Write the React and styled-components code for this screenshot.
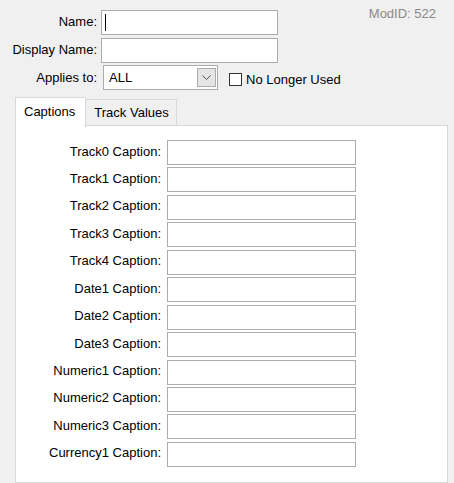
import React, { useState } from 'react';
import styled, { createGlobalStyle } from 'styled-components';

const captions = [
  'Track0 Caption:',
  'Track1 Caption:',
  'Track2 Caption:',
  'Track3 Caption:',
  'Track4 Caption:',
  'Date1 Caption:',
  'Date2 Caption:',
  'Date3 Caption:',
  'Numeric1 Caption:',
  'Numeric2 Caption:',
  'Numeric3 Caption:',
  'Currency1 Caption:',
];

function App() {
  const [tab, setTab] = useState('captions');

  return (
    <Window>
      <GlobalStyle />
      <Header>
        <TopForm>
          <Label>Name:</Label>
          <CaretBox>
            <TextBox />
            <Caret />
          </CaretBox>
          <Label>Display Name:</Label>
          <TextBox />
          <Label>Applies to:</Label>
          <SelectRow>
            <Combo>
              <ComboText>ALL</ComboText>
              <ComboButton>
                <svg width="9" height="5" viewBox="0 0 9 5">
                  <path d="M0.5 0.5 L4.5 4.5 L8.5 0.5" fill="none" stroke="#555" strokeWidth="1" />
                </svg>
              </ComboButton>
            </Combo>
            <Check>
              <CheckBox />
              No Longer Used
            </Check>
          </SelectRow>
        </TopForm>
        <ModId>ModID: 522</ModId>
      </Header>

      <Tabs>
        <TabStrip>
          <Tab active={tab === 'captions'} onClick={() => setTab('captions')}>
            Captions
          </Tab>
          <Tab active={tab === 'values'} onClick={() => setTab('values')}>
            Track Values
          </Tab>
        </TabStrip>
        <Panel>
          {tab === 'captions' && (
            <CaptionGrid>
              {captions.map((c) => (
                <React.Fragment key={c}>
                  <CaptionLabel>{c}</CaptionLabel>
                  <CaptionInput />
                </React.Fragment>
              ))}
            </CaptionGrid>
          )}
        </Panel>
      </Tabs>
    </Window>
  );
}

const GlobalStyle = createGlobalStyle`
  body {
    margin: 0;
    background: #f0f0f0;
    font-family: "Liberation Sans", Arial, sans-serif;
    font-size: 13px;
    color: #000;
  }
`;

const Window = styled.div`
  width: 454px;
  height: 483px;
  background: #f0f0f0;
  overflow: hidden;
`;

const Header = styled.div`
  display: flex;
  align-items: flex-start;
`;

const TopForm = styled.div`
  display: grid;
  grid-template-columns: 97px 177px;
  column-gap: 4px;
  row-gap: 3px;
  padding-top: 10px;
  align-items: center;
`;

const Label = styled.div`
  text-align: right;
  white-space: nowrap;
  padding-bottom: 2px;
`;

const TextBox = styled.div`
  height: 25px;
  box-sizing: border-box;
  background: #fff;
  border: 1px solid #acacac;
`;

const CaretBox = styled.div`
  position: relative;
`;

const Caret = styled.span`
  position: absolute;
  left: 4px;
  top: 4px;
  width: 1px;
  height: 17px;
  background: #000;
`;

const SelectRow = styled.div`
  display: flex;
  align-items: center;
  margin: -1px 0 0 2px;
  width: 260px;
`;

const Combo = styled.div`
  width: 115px;
  height: 25px;
  box-sizing: border-box;
  background: #fff;
  border: 1px solid #acacac;
  display: flex;
  align-items: center;
  padding: 1px;
`;

const ComboText = styled.span`
  flex: 1;
  padding-left: 4px;
  padding-bottom: 1px;
`;

const ComboButton = styled.div`
  width: 19px;
  height: 19px;
  box-sizing: border-box;
  background: #e5e5e5;
  border: 1px solid #acacac;
  display: flex;
  align-items: center;
  justify-content: center;
`;

const Check = styled.label`
  display: flex;
  align-items: center;
  gap: 4px;
  margin: 4px 0 0 11px;
  white-space: nowrap;
`;

const CheckBox = styled.span`
  width: 13px;
  height: 13px;
  box-sizing: border-box;
  background: #fff;
  border: 1px solid #333;
`;

const ModId = styled.div`
  margin-left: auto;
  padding: 6px 18px 0 0;
  color: #8a8a8a;
`;

const Tabs = styled.div`
  margin: 6px 0 0 15px;
  width: 433px;
`;

const TabStrip = styled.div`
  display: flex;
  align-items: flex-end;
  height: 30px;
  position: relative;
  z-index: 1;
`;

const Tab = styled.div`
  box-sizing: border-box;
  height: ${(p) => (p.active ? '30px' : '27px')};
  padding: ${(p) => (p.active ? '6px 10px 0 8px' : '5px 7px 0 8px')};
  background: ${(p) => (p.active ? '#fff' : '#f0f0f0')};
  border: 1px solid #d9d9d9;
  border-bottom: ${(p) => (p.active ? 'none' : '1px solid #d9d9d9')};
  margin-left: ${(p) => (p.active ? '0' : '-1px')};
  margin-bottom: ${(p) => (p.active ? '-1px' : '0')};
  cursor: pointer;
  white-space: nowrap;
`;

const Panel = styled.div`
  box-sizing: border-box;
  height: 358px;
  margin-top: -1px;
  background: #fff;
  border: 1px solid #d9d9d9;
  padding-top: 14px;
`;

const CaptionGrid = styled.div`
  display: grid;
  grid-template-columns: 145px 189px;
  column-gap: 6px;
  row-gap: 2.45px;
  align-items: center;
`;

const CaptionLabel = styled.div`
  text-align: right;
  white-space: nowrap;
  padding-bottom: 3px;
`;

const CaptionInput = styled.div`
  height: 25px;
  box-sizing: border-box;
  background: #fff;
  border: 1px solid #acacac;
`;

export default App;
